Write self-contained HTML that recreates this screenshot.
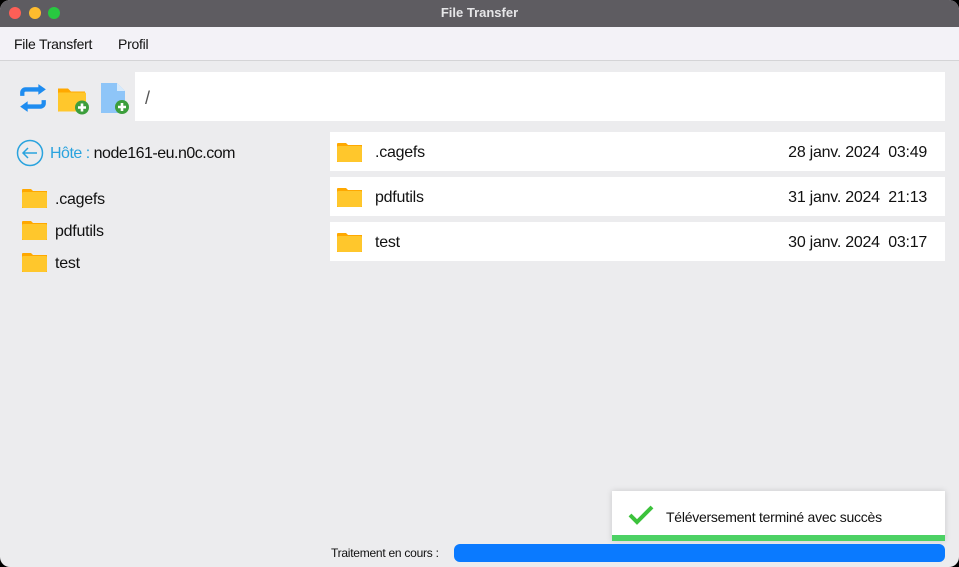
<!DOCTYPE html>
<html><head><meta charset="utf-8"><style>
*{margin:0;padding:0;box-sizing:border-box}
body{width:959px;height:567px;overflow:hidden;background:#000;font-family:"Liberation Sans",sans-serif;letter-spacing:-0.25px}
.win{position:absolute;left:0;top:0;width:959px;height:567px;background:#ececee;border-radius:10px;overflow:hidden}
.title{position:absolute;left:0;top:0;width:959px;height:27px;background:#5e5c61;color:#e6e6e8;font-size:13px;font-weight:bold;text-align:center;line-height:26px;letter-spacing:0}
.dot{position:absolute;top:7px;width:12px;height:12px;border-radius:50%}
.menu{position:absolute;top:27px;left:0;width:959px;height:34px;background:#f3f2f7;border-bottom:1px solid #d4d4d6;font-size:14px;color:#111}
.menu span{position:absolute;top:9px}
.path{position:absolute;left:135px;top:72px;width:810px;height:49px;background:#fff;font-size:18px;color:#555;padding:16px 0 0 10px}
.row{position:absolute;left:330px;width:615px;height:39px;background:#fff;font-size:16px;color:#111}
.row .n{position:absolute;left:45px;top:12px}
.row .d{position:absolute;right:18px;top:12px}
.row svg{position:absolute;left:7px;top:10px}
.li{position:absolute;left:22px;font-size:16px;color:#111}
.li span{position:absolute;left:33px;top:1px}
.li svg{position:absolute;left:0;top:-2px}
</style></head><body><div class="win">
<div class="title">File Transfer
<div class="dot" style="left:9px;background:#fe5f57"></div>
<div class="dot" style="left:29px;background:#febc2e"></div>
<div class="dot" style="left:48px;background:#28c840"></div></div>
<div class="menu"><span style="left:14px">File Transfert</span><span style="left:118px">Profil</span></div>
<svg style="position:absolute;left:18px;top:83px" width="30" height="30" viewBox="0 0 28 28"><path d="M4 12 V9 a3 3 0 0 1 3-3 H20" stroke="#1e8cf0" stroke-width="4" fill="none"/><path d="M19 1 L26 6 L19 11Z" fill="#1e8cf0"/><path d="M24 16 V19 a3 3 0 0 1 -3 3 H8" stroke="#1e8cf0" stroke-width="4" fill="none"/><path d="M9 17 L2 22 L9 27Z" fill="#1e8cf0"/></svg>
<svg style="position:absolute;left:57px;top:85px" width="34" height="31" viewBox="0 0 34 30"><path d="M1 3 h10 l3 3 h14 v20 H1z" fill="#ffa800"/><rect x="1" y="7" width="28" height="19" rx="1" fill="#ffc72c"/><circle cx="25" cy="22" r="7" fill="#3c9e3c"/><path d="M25 18v8M21 22h8" stroke="#fff" stroke-width="2.6"/></svg>
<svg style="position:absolute;left:100px;top:82px" width="32" height="34" viewBox="0 0 32 34"><path d="M1 1 h16 l8 8 v22 H1z" fill="#8ec5f8"/><path d="M17 1 v8 h8z" fill="#d6eafc"/><circle cx="22" cy="25" r="7" fill="#3c9e3c"/><path d="M22 21v8M18 25h8" stroke="#fff" stroke-width="2.6"/></svg>
<div class="path">/</div>
<svg style="position:absolute;left:16px;top:139px" width="28" height="28" viewBox="0 0 28 28"><circle cx="14" cy="14" r="12.5" fill="none" stroke="#2aa3de" stroke-width="1.5"/><path d="M21 14H7M12 9l-5 5 5 5" fill="none" stroke="#2aa3de" stroke-width="1.5"/></svg>
<div style="position:absolute;left:50px;top:145px;font-size:16px;color:#111;letter-spacing:-0.5px"><span style="color:#2aa3de">Hôte : </span>node161-eu.n0c.com</div>
<svg width="0" height="0"><defs><g id="f"><path d="M0 2 a1 1 0 0 1 1-1 h8 l2 2 h14 v17 H0z" fill="#ffa800"/><rect x="0" y="4" width="25" height="16" rx="1.5" fill="#ffc72c"/></g></defs></svg>
<div class="li" style="top:190px"><svg width="26" height="21"><use href="#f"/></svg><span>.cagefs</span></div>
<div class="li" style="top:222px"><svg width="26" height="21"><use href="#f"/></svg><span>pdfutils</span></div>
<div class="li" style="top:254px"><svg width="26" height="21"><use href="#f"/></svg><span>test</span></div>
<div class="row" style="top:132px"><svg width="26" height="21"><use href="#f"/></svg><span class="n">.cagefs</span><span class="d">28 janv. 2024&nbsp; 03:49</span></div>
<div class="row" style="top:177px"><svg width="26" height="21"><use href="#f"/></svg><span class="n">pdfutils</span><span class="d">31 janv. 2024&nbsp; 21:13</span></div>
<div class="row" style="top:222px"><svg width="26" height="21"><use href="#f"/></svg><span class="n">test</span><span class="d">30 janv. 2024&nbsp; 03:17</span></div>
<div style="position:absolute;left:612px;top:491px;width:333px;height:50px;background:#fff;box-shadow:0 0 6px rgba(0,0,0,.15);border-bottom:6px solid #4cd164">
<svg style="position:absolute;left:16px;top:14px" width="26" height="20" viewBox="0 0 26 20"><path d="M2 10l7 7L24 2" fill="none" stroke="#3cc23c" stroke-width="4"/></svg>
<span style="position:absolute;left:54px;top:18px;font-size:14px;color:#111">Téléversement terminé avec succès</span></div>
<div style="position:absolute;left:331px;top:546px;font-size:12px;color:#111">Traitement en cours :</div>
<div style="position:absolute;left:454px;top:544px;width:491px;height:18px;background:#0a7aff;border-radius:6px"></div>
</div></body></html>
